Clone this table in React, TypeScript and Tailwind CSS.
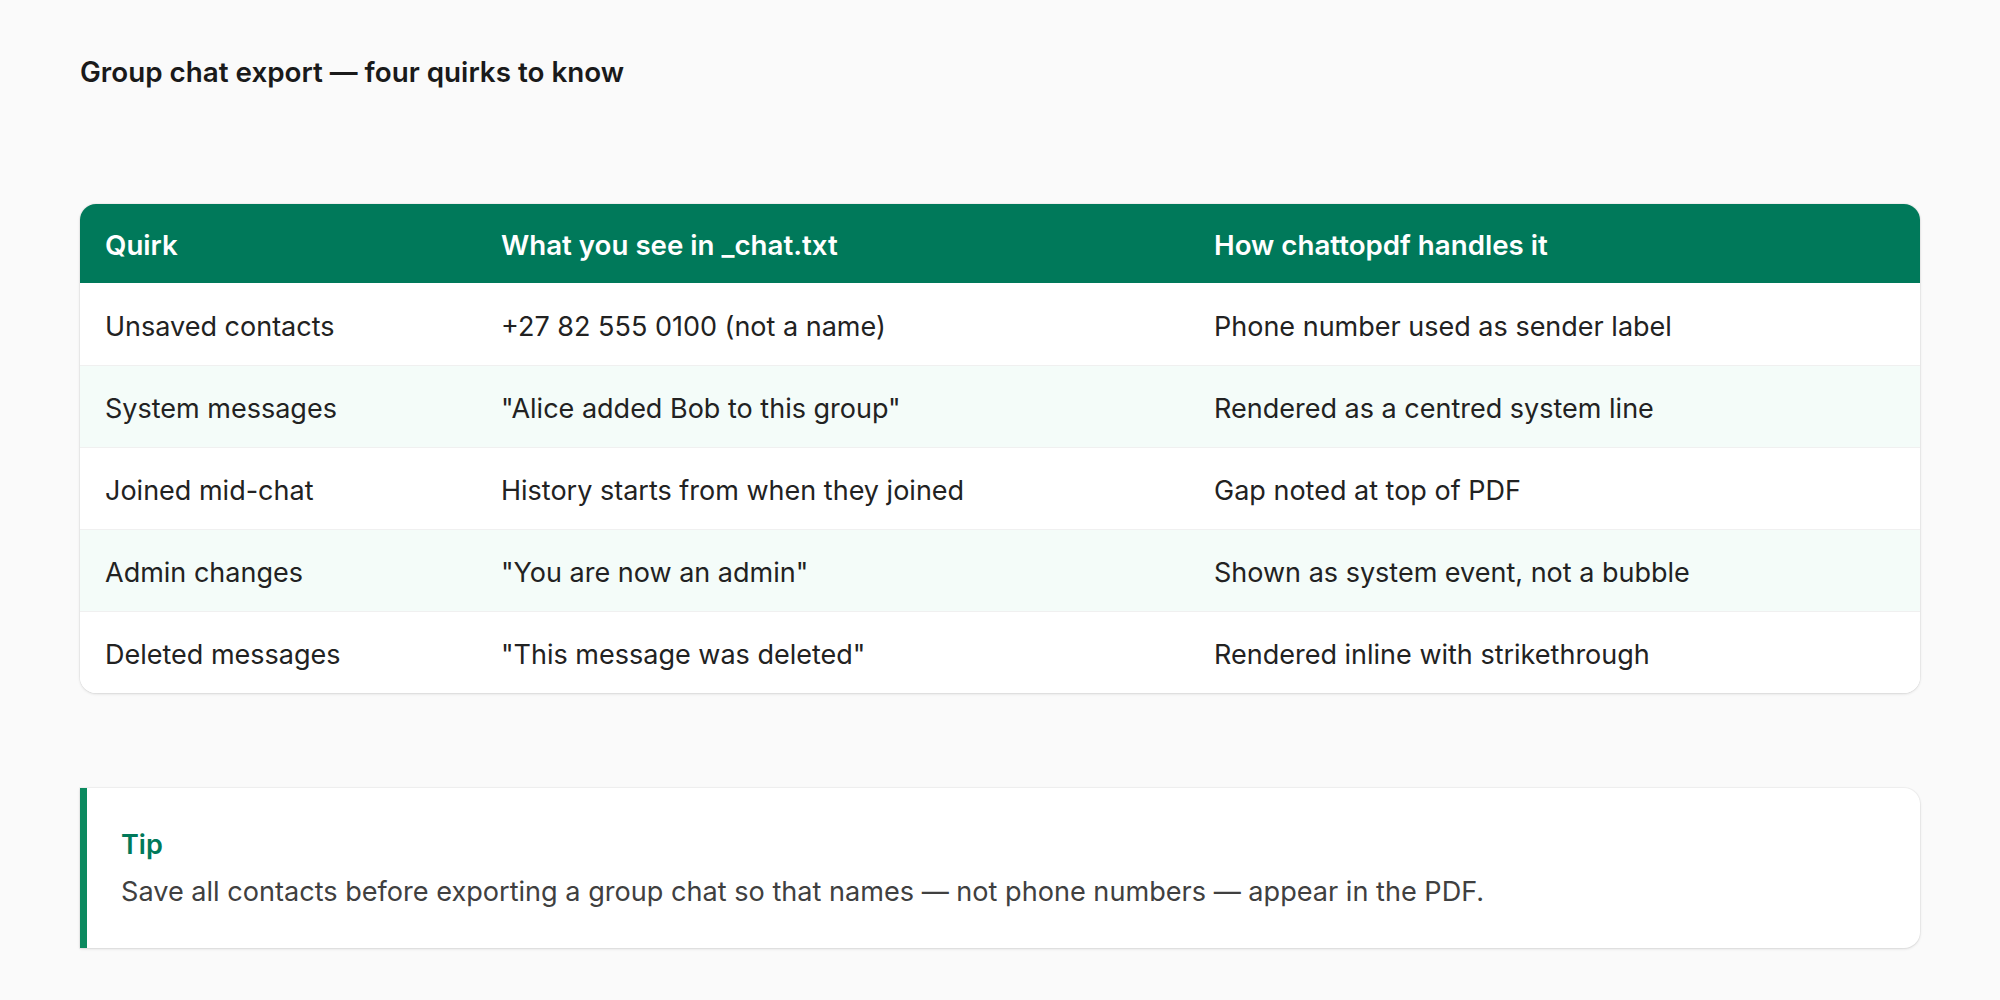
import React from 'react';

const rows = [
  { quirk: 'Unsaved contacts', seen: '+27 82 555 0100 (not a name)', handled: 'Phone number used as sender label' },
  { quirk: 'System messages', seen: '"Alice added Bob to this group"', handled: 'Rendered as a centred system line' },
  { quirk: 'Joined mid-chat', seen: 'History starts from when they joined', handled: 'Gap noted at top of PDF' },
  { quirk: 'Admin changes', seen: '"You are now an admin"', handled: 'Shown as system event, not a bubble' },
  { quirk: 'Deleted messages', seen: '"This message was deleted"', handled: 'Rendered inline with strikethrough' },
];

const App = () => {
  return (
    <div className="min-h-screen bg-[#fafafa] px-[80px] pt-[53px] pb-[52px] font-['Inter','Liberation_Sans',sans-serif]">
      <h2 className="text-[27.8px] font-semibold leading-[38px] text-[#1a1a1a]">
        Group chat export — four quirks to know
      </h2>

      <div className="mt-[113px] overflow-hidden rounded-2xl bg-white shadow-[0_1px_3px_rgba(0,0,0,0.12),0_0_0_1px_rgba(0,0,0,0.03)]">
        <table className="w-full table-fixed border-collapse text-left">
          <colgroup>
            <col className="w-[397px]" />
            <col className="w-[713px]" />
            <col />
          </colgroup>
          <thead>
            <tr className="h-[79px] bg-[#00795a] text-white">
              <th className="px-[25px] pt-[4px] text-[27.7px] font-semibold">Quirk</th>
              <th className="px-[24px] pt-[4px] text-[27.7px] font-semibold">What you see in _chat.txt</th>
              <th className="px-[24px] pt-[4px] text-[27.7px] font-semibold">How chattopdf handles it</th>
            </tr>
          </thead>
          <tbody>
            {rows.map((row, i) => (
              <tr
                key={row.quirk}
                className={`h-[82px] text-[27px] text-[#222222] ${i > 0 ? 'border-t border-[#f0f0f0]' : ''} ${i % 2 === 1 ? 'bg-[#f4fcf9]' : 'bg-white'}`}
              >
                <td className="px-[25px] pt-[6px]">{row.quirk}</td>
                <td className="px-[24px] pt-[6px]">{row.seen}</td>
                <td className="px-[24px] pt-[6px]">{row.handled}</td>
              </tr>
            ))}
          </tbody>
        </table>
      </div>

      <div className="mt-[95px] rounded-r-2xl border-l-[7px] border-[#0b8a5f] bg-white px-[34px] pt-[35px] pb-[32px] shadow-[0_1px_3px_rgba(0,0,0,0.12),0_0_0_1px_rgba(0,0,0,0.03)]">
        <div className="text-[27px] font-semibold leading-[44px] text-[#00795a]">Tip</div>
        <p className="text-[27.1px] leading-[49px] text-[#404040]">
          Save all contacts before exporting a group chat so that names — not phone numbers — appear in the PDF.
        </p>
      </div>
    </div>
  );
};

export default App;
